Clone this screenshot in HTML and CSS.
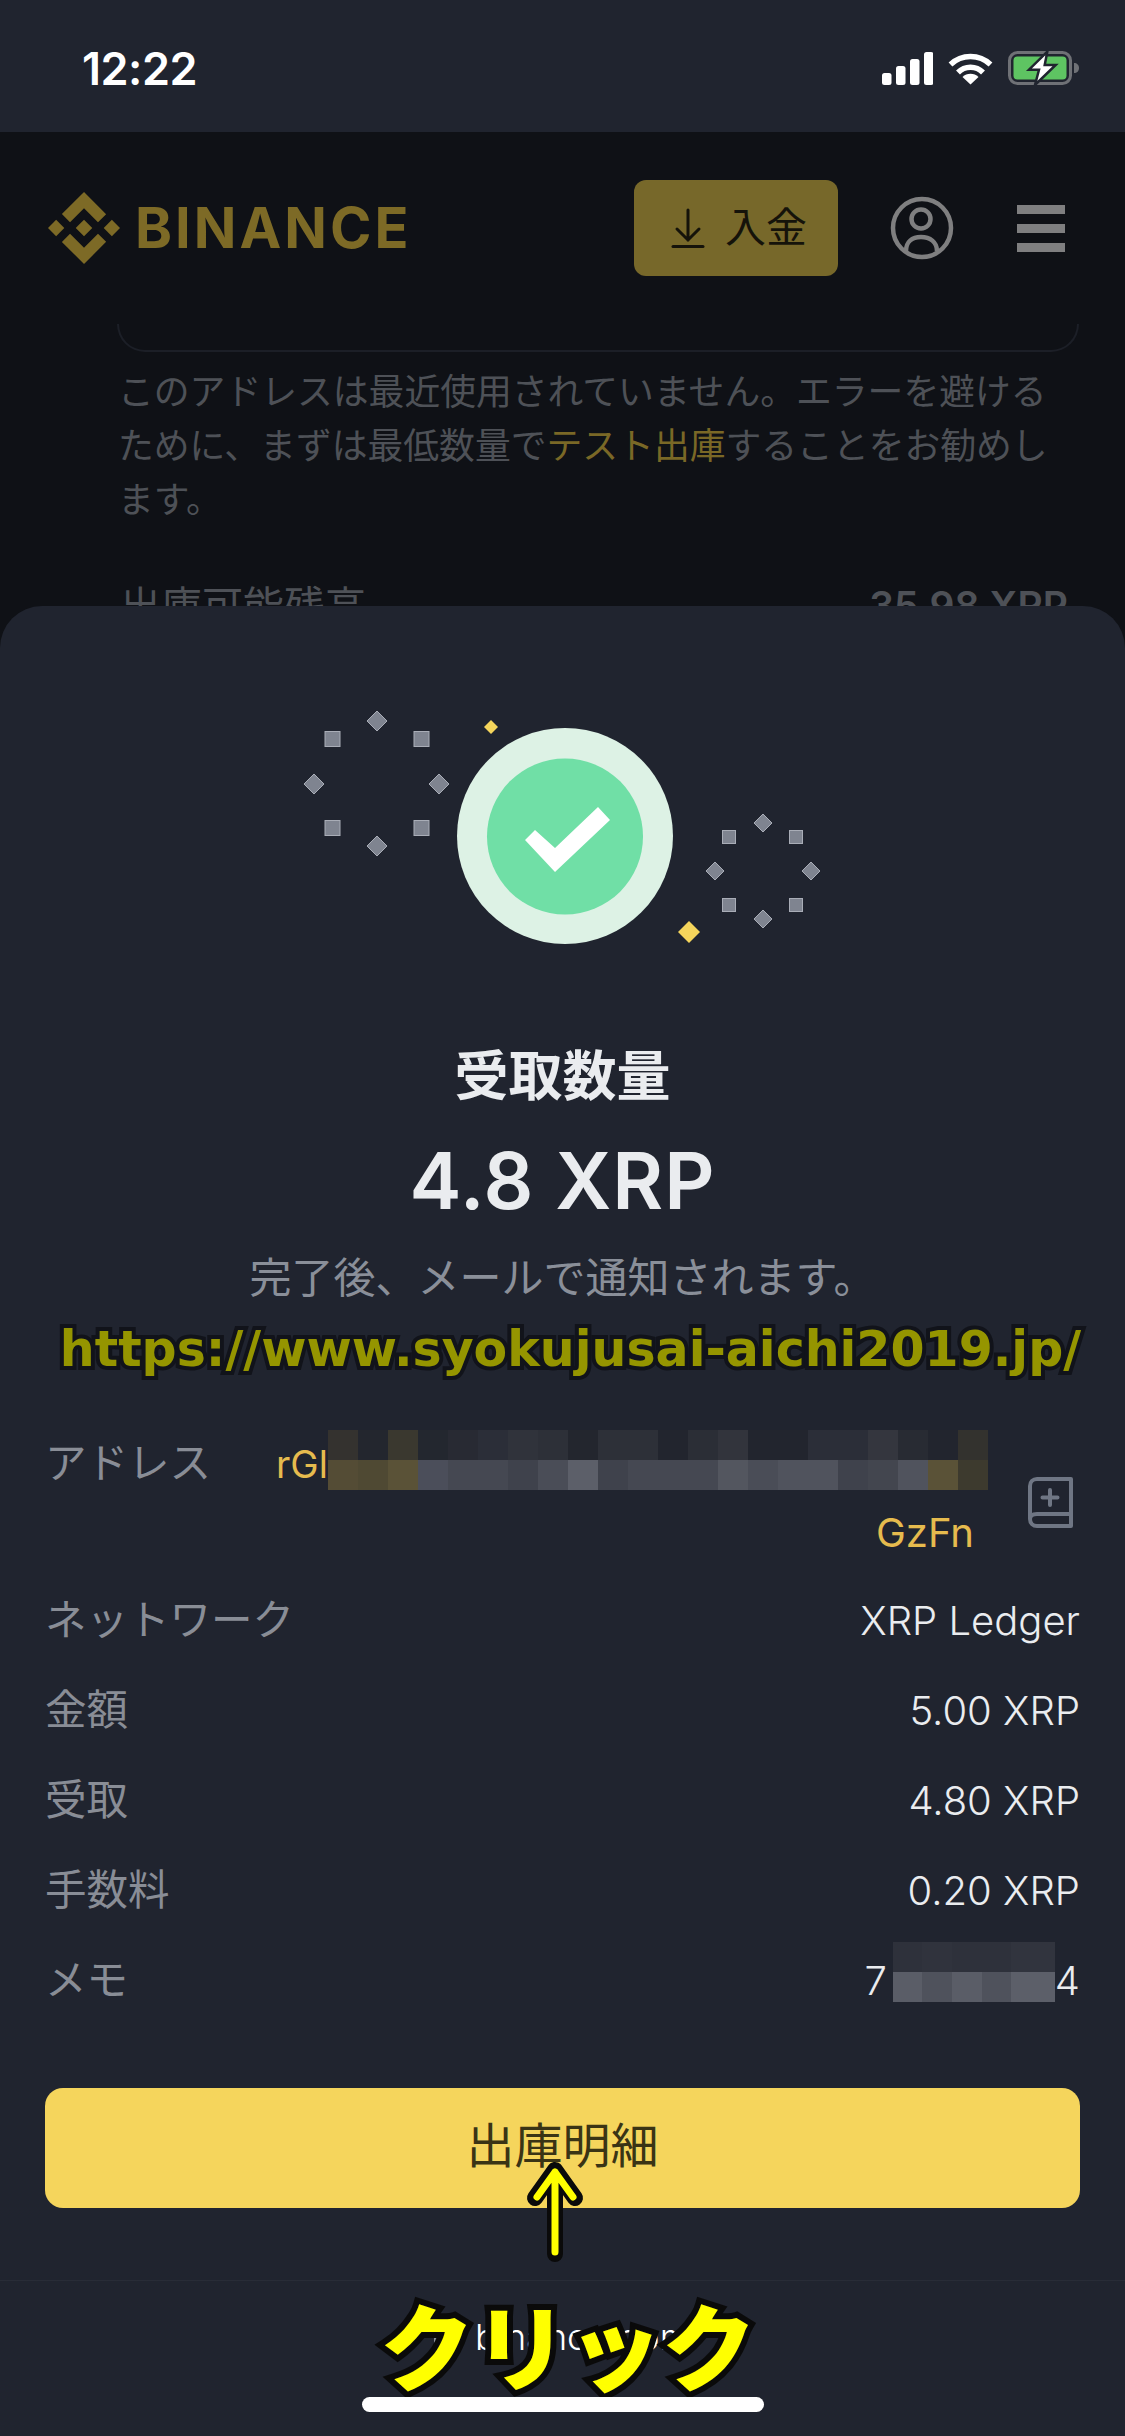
FILE: index.html
```html
<!DOCTYPE html>
<html lang="ja">
<head>
    <meta charset="UTF-8">
    <meta name="viewport" content="width=device-width, initial-scale=1.0">
    <title>出庫</title>
    <link rel="stylesheet" href="styles.css">
</head>
<body>
    <div class="status-bar">
        <span class="clock">12:22</span>
        <div class="status-icons">
            <svg class="signal" width="51" height="33" viewBox="0 0 51 33" fill="#fff">
                <rect x="0" y="21" width="9.5" height="12" rx="2.5"/>
                <rect x="14" y="14" width="9.5" height="19" rx="2.5"/>
                <rect x="28" y="7" width="9.5" height="26" rx="2.5"/>
                <rect x="42" y="0" width="9.5" height="33" rx="2.5"/>
            </svg>
            <svg class="wifi" width="45" height="34" viewBox="0 0 45 34">
                <path d="M2.5 13.5A29 29 0 0 1 42.5 13.5" fill="none" stroke="#fff" stroke-width="5.5"/>
                <path d="M10 21.5A17.5 17.5 0 0 1 35 21.5" fill="none" stroke="#fff" stroke-width="5.5"/>
                <path d="M22.5 33.5L14.5 26A11.5 11.5 0 0 1 30.5 26Z" fill="#fff"/>
            </svg>
            <svg class="battery" width="75" height="36" viewBox="0 0 75 36">
                <rect x="1.5" y="2.5" width="61" height="31" rx="8" fill="none" stroke="#6f7176" stroke-width="3"/>
                <rect x="5.5" y="6.5" width="53" height="23" rx="4" fill="#5ec462"/>
                <path d="M66 13c3 0 5 2 5 5s-2 5-5 5z" fill="#6f7176"/>
                <path d="M39.3 1.7L21 19.7H31L27 35L47.7 15H36.7Z" fill="#fff" stroke="#20242f" stroke-width="2.5"/>
            </svg>
        </div>
    </div>

    <div class="page">
        <header class="site-header">
            <svg class="logo-mark" width="72" height="72" viewBox="0 0 126.61 126.61" fill="#7d6a26">
                <path d="M38.73 53.2l24.59-24.58 24.6 24.6 14.3-14.31L63.32 0 24.42 38.9z"/>
                <path d="M0 63.31l14.3-14.31 14.31 14.31-14.31 14.3z"/>
                <path d="M38.73 73.41l24.59 24.59 24.6-24.6 14.31 14.29-38.9 38.91-38.91-38.88z"/>
                <path d="M98 63.31l14.3-14.31 14.31 14.3-14.31 14.32z"/>
                <path d="M77.83 63.3L63.32 48.78 52.59 59.51l-1.24 1.23-2.54 2.54 14.51 14.5 14.51-14.47z"/>
            </svg>
            <span class="logo-text">BINANCE</span>
            <button class="deposit-btn">
                <svg width="34" height="40" viewBox="0 0 34 40" fill="none" stroke="#15130a" stroke-width="3" stroke-linecap="round">
                    <path d="M17 2V32M6 21L17 32L28 21"/>
                    <path d="M2 38.500H32"/>
                </svg>
                <span class="deposit-text">入金</span>
            </button>
            <svg class="user-icon" width="64" height="64" viewBox="0 0 64 64" fill="none" stroke="#7f7f80" stroke-width="4.500">
                <circle cx="32" cy="32" r="29"/>
                <circle cx="31" cy="23" r="9.500"/>
                <path d="M16 55C16 46 22 41 31 41C40 41 47 46 47 55"/>
            </svg>
            <div class="menu-icon">
                <span></span>
                <span></span>
                <span></span>
            </div>
        </header>
        <div class="address-card"></div>
        <p class="hint">このアドレスは最近使用されていません。エラーを避けるために、まずは最低数量で<span class="hint-link">テスト出庫</span>することをお勧めします。</p>
        <div class="balance-row">
            <span>出庫可能残高</span>
            <span class="balance-value">35.98 XRP</span>
        </div>
    </div>

    <section class="sheet">
        <svg class="hero" width="560" height="260" viewBox="280 700 560 260">
            <g fill="#7f8490" stroke="#a9adb7" stroke-width="1">
                <rect x="325" y="731.500" width="15" height="15"/>
                <rect x="414" y="731.500" width="15" height="15"/>
                <rect x="325" y="820.500" width="15" height="15"/>
                <rect x="414" y="820.500" width="15" height="15"/>
                <path d="M377 711l10 10-10 10-10-10z"/>
                <path d="M314 774l10 10-10 10-10-10z"/>
                <path d="M439 774l10 10-10 10-10-10z"/>
                <path d="M377 836l10 10-10 10-10-10z"/>
                <rect x="722.500" y="830.500" width="13" height="13"/>
                <rect x="789.500" y="830.500" width="13" height="13"/>
                <rect x="722.500" y="898.500" width="13" height="13"/>
                <rect x="789.500" y="898.500" width="13" height="13"/>
                <path d="M763 814l9 9-9 9-9-9z"/>
                <path d="M715 862l9 9-9 9-9-9z"/>
                <path d="M811 862l9 9-9 9-9-9z"/>
                <path d="M763 910l9 9-9 9-9-9z"/>
            </g>
            <path d="M491 720l7 7-7 7-7-7z" fill="#f5d55c"/>
            <path d="M689 921l11 11-11 11-11-11z" fill="#f5d55c"/>
            <circle cx="565" cy="836" r="108" fill="#ddf2e5"/>
            <circle cx="565" cy="836.500" r="78" fill="#70dfa6"/>
            <path d="M525 840L555 872L610 820L598 807L555 848L535 830Z" fill="#fff"/>
        </svg>

        <h1 class="title">受取数量</h1>
        <div class="amount">4.8 XRP</div>
        <p class="note">完了後、メールで通知されます。</p>
        <div class="promo-url">https://www.syokujusai-aichi2019.jp/</div>

        <div class="address-row">
            <span class="label">アドレス</span>
            <div class="address-value">
                <div class="address-line">
                    <span>rGl</span>
                    <div class="mosaic-address"></div>
                </div>
                <div class="address-end">GzFn</div>
            </div>
            <svg class="book-icon" width="45" height="51" viewBox="0 0 45 51" fill="none" stroke="#6f7684" stroke-width="4" stroke-linejoin="round">
                <path d="M43 2H9C5 2 2 5 2 9V42C2 46 5 49 9 49H43Z"/>
                <path d="M2 42C2 38 5 37 9 37H43"/>
                <path d="M22 13V28M14.500 20.500H29.500" stroke-linecap="round"/>
            </svg>
        </div>

        <div class="detail-row"><span class="label">ネットワーク</span><span class="value">XRP Ledger</span></div>
        <div class="detail-row"><span class="label">金額</span><span class="value">5.00 XRP</span></div>
        <div class="detail-row"><span class="label">受取</span><span class="value">4.80 XRP</span></div>
        <div class="detail-row"><span class="label">手数料</span><span class="value">0.20 XRP</span></div>
        <div class="detail-row memo-row">
            <span class="label">メモ</span>
            <span class="value">7<span class="memo-gap"></span>4</span>
            <div class="mosaic-memo"></div>
        </div>

        <button class="details-btn"><span class="details-text">出庫明細</span></button>

        <footer class="site-footer">
            <svg width="10" height="24" viewBox="0 0 10 24" fill="#8a8f99"><path d="M8 0V24H0V12Z"/></svg>
            <span>binance.com</span>
        </footer>
    </section>

    <!-- annotations drawn on top of the screenshot -->
    <svg class="note-arrow" width="70" height="110" viewBox="0 0 70 110" fill="none" stroke-linecap="round" stroke-linejoin="round">
        <path d="M35 99V15M15 43L35 15L55 43" stroke="#0a0a0a" stroke-width="16"/>
        <path d="M35 97V17M17 42L35 17L53 42" stroke="#ffff00" stroke-width="7"/>
    </svg>
    <div class="click-label">クリック</div>
    <div class="home-bar"></div>
</body>
</html>
```

FILE: styles.css
```css
* {
    box-sizing: border-box;
}
body {
    position: relative;
    width: 1125px;
    height: 2436px;
    margin: 0;
    overflow: hidden;
    background: #0f1116;
    font-family: Inter, "Noto Sans CJK JP", sans-serif;
}
p, h1 {
    margin: 0;
}

/* status bar */
.status-bar {
    display: flex;
    justify-content: space-between;
    align-items: center;
    height: 132px;
    padding: 4px 42px 0 82px;
    background: #20242f;
}
.clock {
    color: #fff;
    font-size: 45px;
    font-weight: 600;
    letter-spacing: -0.5px;
}
.status-icons {
    display: flex;
    align-items: center;
    gap: 15px;
}

/* dimmed page behind the sheet */
.page {
    height: 474px;
    overflow: hidden;
    background: #0f1116;
}
.site-header {
    display: flex;
    align-items: center;
    height: 192px;
    padding: 0 60px 0 48px;
}
.logo-mark {
    margin-right: 15px;
}
.logo-text {
    color: #7d6a26;
    font-size: 56px;
    font-weight: 700;
    letter-spacing: 3px;
}
.deposit-btn {
    display: flex;
    align-items: center;
    gap: 20px;
    width: 204px;
    height: 96px;
    margin-left: auto;
    padding: 0 0 0 37px;
    border: 0;
    border-radius: 12px;
    background: #77682a;
    color: #15130a;
    font-family: "Noto Sans CJK JP", sans-serif;
    font-size: 41px;
}
.deposit-text {
    padding-bottom: 8px;
}
.user-icon {
    margin-left: 52px;
}
.menu-icon {
    display: flex;
    flex-direction: column;
    gap: 10px;
    width: 48px;
    margin-left: 63px;
}
.menu-icon span {
    height: 9px;
    background: #7f7f80;
}
.address-card {
    height: 28px;
    margin: 0 46px 0 117px;
    border: 2px solid #1c1f27;
    border-top: 0;
    border-radius: 0 0 30px 30px;
}
.hint {
    margin: 10px 60px 0 118px;
    color: #4e5157;
    font-family: "Noto Sans CJK JP", sans-serif;
    font-size: 35.800px;
    line-height: 54px;
}
.hint-link {
    color: #7a6826;
}
.balance-row {
    display: flex;
    justify-content: space-between;
    align-items: center;
    margin: 46px 57px 0 120px;
    color: #4e5157;
    font-family: "Noto Sans CJK JP", sans-serif;
    font-size: 41px;
    line-height: 60px;
}
.balance-value {
    padding-top: 6px;
    font-family: Inter, sans-serif;
    font-size: 39px;
    font-weight: 600;
}

/* bottom sheet */
.sheet {
    position: absolute;
    top: 606px;
    left: 0;
    right: 0;
    bottom: 0;
    padding: 94px 45px 0;
    border-radius: 42px 42px 0 0;
    background: #20242f;
}
.hero {
    display: block;
    margin-left: 235px;
}
.title {
    margin-top: 78px;
    color: #eaecef;
    font-family: "Noto Sans CJK JP", sans-serif;
    font-size: 54px;
    font-weight: 700;
    line-height: 70px;
    text-align: center;
}
.amount {
    margin-top: 28px;
    color: #eaecef;
    font-size: 78px;
    font-weight: 600;
    letter-spacing: 1px;
    line-height: 90px;
    text-align: center;
}
.note {
    margin-top: 19px;
    color: #8a8f99;
    font-family: "Noto Sans CJK JP", sans-serif;
    font-size: 42px;
    line-height: 60px;
    text-align: center;
}
.promo-url {
    margin: 15px -28px 0 -12px;
    color: #959500;
    font-family: "DejaVu Sans", sans-serif;
    font-size: 49px;
    font-weight: 700;
    line-height: 60px;
    text-align: center;
    white-space: nowrap;
    -webkit-text-stroke: 8px #11131a;
    paint-order: stroke fill;
}

/* details */
.address-row {
    display: flex;
    height: 145px;
    margin-top: 50px;
}
.label {
    padding-bottom: 6px;
    color: #898d96;
    font-family: "Noto Sans CJK JP", sans-serif;
    font-size: 41.500px;
}
.address-row .label {
    width: 231px;
    padding-bottom: 0;
    line-height: 60px;
}
.address-value {
    width: 730px;
    color: #e6bb4e;
    font-size: 38px;
}
.address-line {
    display: flex;
    align-items: center;
    height: 60px;
}
.address-line span {
    width: 52px;
    padding-top: 8px;
    overflow: hidden;
}
.mosaic-address {
    flex-shrink: 0;
    width: 660px;
    height: 60px;
    background:
        linear-gradient(90deg, #34322f 0 30px, #23262e 0 60px, #3a382f 0 90px, #23272f 0 120px, #282a33 0 150px, #2b2e38 0 180px, #30333b 0 210px, #2d3038 0 240px, #23262e 0 270px, #2d3038 0 330px, #22252e 0 360px, #2b2e36 0 390px, #32343c 0 420px, #22252e 0 480px, #2b2e38 0 540px, #34363e 0 570px, #282b33 0 600px, #22252e 0 630px, #33322e 0 660px) top / 100% 50% no-repeat,
        linear-gradient(90deg, #544c35 0 30px, #4f4933 0 60px, #5a5237 0 90px, #4b4e5a 0 120px, #454852 0 180px, #3f424c 0 210px, #4a4d57 0 240px, #5c5f69 0 270px, #3f424c 0 300px, #454852 0 390px, #53565f 0 420px, #4a4d57 0 450px, #50535d 0 510px, #3f424c 0 540px, #43464f 0 570px, #50535d 0 600px, #5a5237 0 630px, #3d3a2e 0 660px) bottom / 100% 50% no-repeat;
}
.address-end {
    margin-top: 18px;
    padding-right: 32px;
    font-size: 40px;
    text-align: right;
}
.book-icon {
    align-self: center;
    margin-left: 22px;
}
.detail-row {
    display: flex;
    justify-content: space-between;
    align-items: center;
    height: 90px;
}
.value {
    color: #eaecef;
    font-size: 40px;
    font-weight: 300;
}
.memo-row {
    position: relative;
}
.memo-gap {
    display: inline-block;
    width: 168px;
}
.mosaic-memo {
    position: absolute;
    top: 7px;
    right: 25px;
    width: 162px;
    height: 60px;
    background:
        linear-gradient(90deg, #2e313b 0 29px, #30333d 0 59px, #2e313b 0 118px, #31343e 0 162px) top / 100% 50% no-repeat,
        linear-gradient(90deg, #5a5d67 0 29px, #4f525c 0 59px, #5a5d67 0 89px, #4f525c 0 118px, #5c5f69 0 162px) bottom / 100% 50% no-repeat;
}
.details-btn {
    display: block;
    width: 1035px;
    height: 120px;
    margin-top: 63px;
    padding: 0 0 12px;
    border: 0;
    border-radius: 18px;
    background: #f5d55c;
    color: #3a3415;
    font-family: "Noto Sans CJK JP", sans-serif;
    font-size: 48px;
}
.site-footer {
    display: flex;
    justify-content: center;
    align-items: center;
    gap: 31px;
    height: 116px;
    margin: 72px -45px 0;
    padding-bottom: 4px;
    border-top: 1px solid #282c37;
    color: #fff;
    font-size: 36px;
    font-weight: 300;
}

/* annotations */
.note-arrow {
    position: absolute;
    top: 2155px;
    left: 520px;
}
.click-label {
    position: absolute;
    top: 2278px;
    left: 380px;
    color: #ffff00;
    font-family: "Noto Sans CJK JP", sans-serif;
    font-size: 94px;
    font-weight: 900;
    line-height: 130px;
    white-space: nowrap;
    -webkit-text-stroke: 12px #0a0a0a;
    paint-order: stroke fill;
}
.home-bar {
    position: absolute;
    top: 2397px;
    left: 362px;
    width: 402px;
    height: 15px;
    border-radius: 8px;
    background: #fff;
}
```
